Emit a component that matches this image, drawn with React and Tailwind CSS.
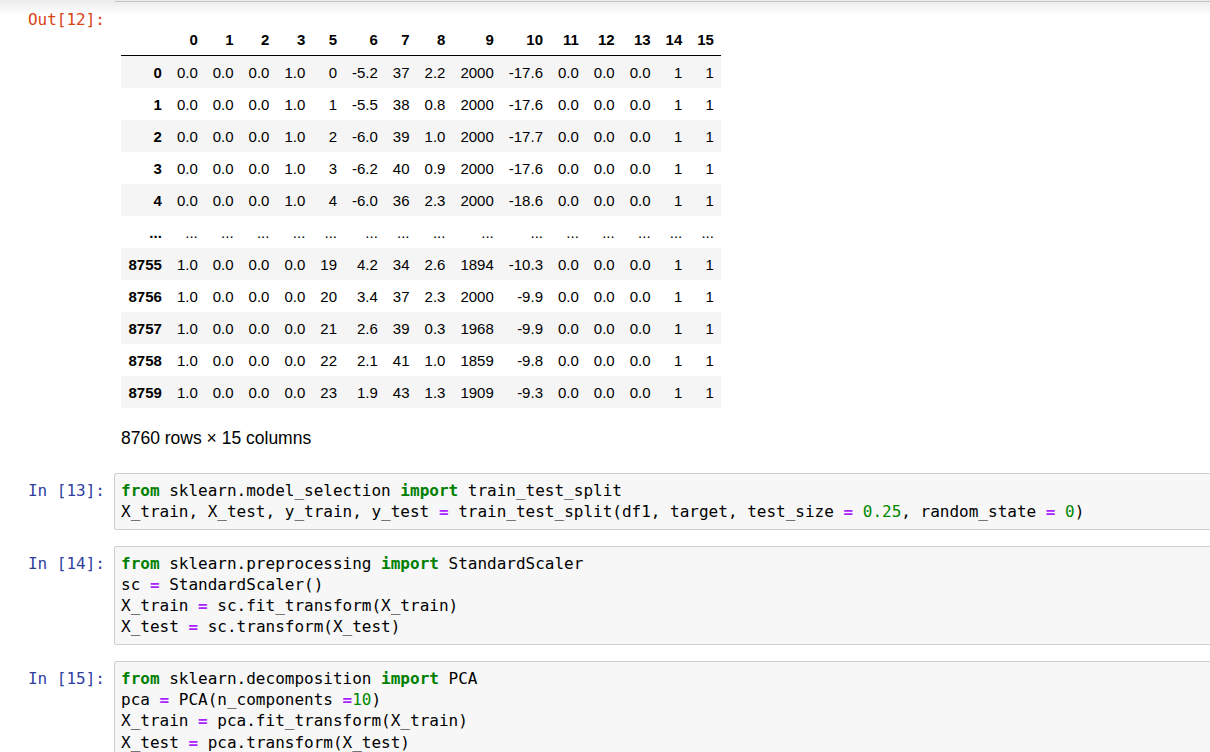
import React from "react";

const mono = "font-['DejaVu_Sans_Mono','Liberation_Mono',monospace]";

const cols = ["0", "1", "2", "3", "5", "6", "7", "8", "9", "10", "11", "12", "13", "14", "15"];

const rows = [
  ["0", "0.0", "0.0", "0.0", "1.0", "0", "-5.2", "37", "2.2", "2000", "-17.6", "0.0", "0.0", "0.0", "1", "1"],
  ["1", "0.0", "0.0", "0.0", "1.0", "1", "-5.5", "38", "0.8", "2000", "-17.6", "0.0", "0.0", "0.0", "1", "1"],
  ["2", "0.0", "0.0", "0.0", "1.0", "2", "-6.0", "39", "1.0", "2000", "-17.7", "0.0", "0.0", "0.0", "1", "1"],
  ["3", "0.0", "0.0", "0.0", "1.0", "3", "-6.2", "40", "0.9", "2000", "-17.6", "0.0", "0.0", "0.0", "1", "1"],
  ["4", "0.0", "0.0", "0.0", "1.0", "4", "-6.0", "36", "2.3", "2000", "-18.6", "0.0", "0.0", "0.0", "1", "1"],
  ["...", "...", "...", "...", "...", "...", "...", "...", "...", "...", "...", "...", "...", "...", "...", "..."],
  ["8755", "1.0", "0.0", "0.0", "0.0", "19", "4.2", "34", "2.6", "1894", "-10.3", "0.0", "0.0", "0.0", "1", "1"],
  ["8756", "1.0", "0.0", "0.0", "0.0", "20", "3.4", "37", "2.3", "2000", "-9.9", "0.0", "0.0", "0.0", "1", "1"],
  ["8757", "1.0", "0.0", "0.0", "0.0", "21", "2.6", "39", "0.3", "1968", "-9.9", "0.0", "0.0", "0.0", "1", "1"],
  ["8758", "1.0", "0.0", "0.0", "0.0", "22", "2.1", "41", "1.0", "1859", "-9.8", "0.0", "0.0", "0.0", "1", "1"],
  ["8759", "1.0", "0.0", "0.0", "0.0", "23", "1.9", "43", "1.3", "1909", "-9.3", "0.0", "0.0", "0.0", "1", "1"],
];

// tiny token helpers for the highlighted code
const K = ({ children }) => <span className="font-bold text-[#008000]">{children}</span>;
const O = ({ children }) => <span className="font-bold text-[#aa22ff]">{children}</span>;
const N = ({ children }) => <span className="text-[#008800]">{children}</span>;

function CodeCell({ n, lines, className = "" }) {
  return (
    <div className={`flex ${className}`}>
      <div className={`${mono} w-[114px] shrink-0 pr-[9px] pt-[7px] text-right text-[16px] leading-[21.3px] text-[#303f9f]`}>
        In [{n}]:
      </div>
      <div className={`${mono} min-w-[1110px] shrink-0 rounded-[2px] border border-[#cfcfcf] bg-[#f7f7f7] px-[6px] py-[6px] text-[16px] leading-[21.3px] text-black whitespace-pre`}>
        {lines.map((l, i) => (
          <div key={i}>{l}</div>
        ))}
      </div>
    </div>
  );
}

export default function App() {
  return (
    <div className="h-[752px] overflow-hidden bg-white bg-[linear-gradient(#ebebeb,#ffffff_15px)] bg-no-repeat">
      <div className="ml-[115px] mt-px h-px bg-[#c4c4c4]" />

      <div className="flex">
        <div className={`${mono} w-[114px] shrink-0 pr-[9px] pt-[7px] text-right text-[16px] leading-[21.3px] text-[#d84315]`}>
          Out[12]:
        </div>
        <div className="pl-[7px] pt-[21px] font-['Liberation_Sans',Arial,sans-serif] text-black">
          <table className="border-collapse text-[15px] leading-[17px]">
            <thead>
              <tr className="border-b border-black">
                <th className="px-[7.5px] py-[7.5px]"></th>
                {cols.map((c) => (
                  <th key={c} className="px-[7.5px] py-[7.5px] text-right font-bold">
                    {c}
                  </th>
                ))}
              </tr>
            </thead>
            <tbody>
              {rows.map((r, i) => (
                <tr key={i} className="odd:bg-[#f5f5f5]">
                  {r.map((v, j) =>
                    j === 0 ? (
                      <th key={j} className="px-[7.5px] py-[7.5px] text-right font-bold">
                        {v}
                      </th>
                    ) : (
                      <td key={j} className="px-[7.5px] py-[7.5px] text-right">
                        {v}
                      </td>
                    )
                  )}
                </tr>
              ))}
            </tbody>
          </table>
          <p className="mt-[18px] text-[17.5px] leading-[25px]">8760 rows × 15 columns</p>
        </div>
      </div>

      <CodeCell
        n={13}
        className="mt-[22px]"
        lines={[
          <>
            <K>from</K> sklearn.model_selection <K>import</K> train_test_split
          </>,
          <>
            X_train, X_test, y_train, y_test <O>=</O> train_test_split(df1, target, test_size <O>=</O> <N>0.25</N>, random_state <O>=</O> <N>0</N>)
          </>,
        ]}
      />

      <CodeCell
        n={14}
        className="mt-[16px]"
        lines={[
          <>
            <K>from</K> sklearn.preprocessing <K>import</K> StandardScaler
          </>,
          <>
            sc <O>=</O> StandardScaler()
          </>,
          <>
            X_train <O>=</O> sc.fit_transform(X_train)
          </>,
          <>
            X_test <O>=</O> sc.transform(X_test)
          </>,
        ]}
      />

      <CodeCell
        n={15}
        className="mt-[16px]"
        lines={[
          <>
            <K>from</K> sklearn.decomposition <K>import</K> PCA
          </>,
          <>
            pca <O>=</O> PCA(n_components <O>=</O><N>10</N>)
          </>,
          <>
            X_train <O>=</O> pca.fit_transform(X_train)
          </>,
          <>
            X_test <O>=</O> pca.transform(X_test)
          </>,
        ]}
      />
    </div>
  );
}
